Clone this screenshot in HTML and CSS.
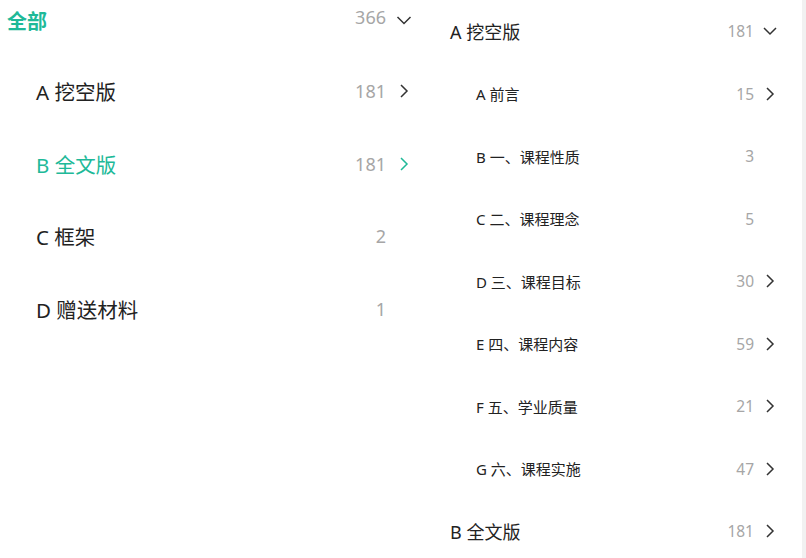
FILE: index.html
```html
<!DOCTYPE html>
<html lang="zh-CN">
<head>
    <meta charset="UTF-8">
    <title>目录</title>
    <link rel="stylesheet" href="styles.css">
</head>
<body>
    <div class="page">
        <!-- 左侧一级目录 -->
        <div class="side">
            <div class="side-head">
                <span class="side-title">全部</span>
                <span class="count">366</span>
                <span class="icon"><svg viewBox="0 0 16 16"><path d="M1.5 5 L8 11.5 L14.5 5"/></svg></span>
            </div>
            <div class="side-row">
                <span class="name">A 挖空版</span>
                <span class="count">181</span>
                <span class="icon"><svg viewBox="0 0 16 16"><path d="M5 2 L11 8 L5 14"/></svg></span>
            </div>
            <div class="side-row active">
                <span class="name">B 全文版</span>
                <span class="count">181</span>
                <span class="icon"><svg viewBox="0 0 16 16"><path d="M5 2 L11 8 L5 14"/></svg></span>
            </div>
            <div class="side-row">
                <span class="name">C 框架</span>
                <span class="count">2</span>
                <span class="icon"></span>
            </div>
            <div class="side-row">
                <span class="name">D 赠送材料</span>
                <span class="count">1</span>
                <span class="icon"></span>
            </div>
        </div>

        <!-- 右侧展开目录 -->
        <div class="tree">
            <div class="tree-row top">
                <span class="name">A 挖空版</span>
                <span class="count">181</span>
                <span class="icon"><svg viewBox="0 0 16 16"><path d="M2 5 L8 11 L14 5"/></svg></span>
            </div>
            <div class="tree-row sub">
                <span class="name">A 前言</span>
                <span class="count">15</span>
                <span class="icon"><svg viewBox="0 0 16 16"><path d="M5 2 L11 8 L5 14"/></svg></span>
            </div>
            <div class="tree-row sub">
                <span class="name">B 一、课程性质</span>
                <span class="count">3</span>
                <span class="icon"></span>
            </div>
            <div class="tree-row sub">
                <span class="name">C 二、课程理念</span>
                <span class="count">5</span>
                <span class="icon"></span>
            </div>
            <div class="tree-row sub">
                <span class="name">D 三、课程目标</span>
                <span class="count">30</span>
                <span class="icon"><svg viewBox="0 0 16 16"><path d="M5 2 L11 8 L5 14"/></svg></span>
            </div>
            <div class="tree-row sub">
                <span class="name">E 四、课程内容</span>
                <span class="count">59</span>
                <span class="icon"><svg viewBox="0 0 16 16"><path d="M5 2 L11 8 L5 14"/></svg></span>
            </div>
            <div class="tree-row sub">
                <span class="name">F 五、学业质量</span>
                <span class="count">21</span>
                <span class="icon"><svg viewBox="0 0 16 16"><path d="M5 2 L11 8 L5 14"/></svg></span>
            </div>
            <div class="tree-row sub">
                <span class="name">G 六、课程实施</span>
                <span class="count">47</span>
                <span class="icon"><svg viewBox="0 0 16 16"><path d="M5 2 L11 8 L5 14"/></svg></span>
            </div>
            <div class="tree-row top">
                <span class="name">B 全文版</span>
                <span class="count">181</span>
                <span class="icon"><svg viewBox="0 0 16 16"><path d="M5 2 L11 8 L5 14"/></svg></span>
            </div>
        </div>

        <div class="scroll-track"></div>
    </div>
</body>
</html>
```

FILE: styles.css
```css
body {
    margin: 0;
    padding: 0;
    background-color: #fff;
    font-family: "Noto Sans", "Noto Sans CJK SC", sans-serif;
    color: #222;
}

.page {
    display: flex;
    height: 558px;
    overflow: hidden;
}

.side {
    width: 420px;
    padding-right: 8px;
    box-sizing: border-box;
}

.side-head {
    display: flex;
    align-items: center;
    height: 40px;
    margin-bottom: 15px;
    padding-left: 7px;
}

.side-title {
    flex: 1;
    color: #20b998;
    font-size: 20px;
    font-weight: bold;
}

.side-head .count {
    margin-top: -6px;
}

.side-row {
    display: flex;
    align-items: center;
    height: 72.5px;
    padding-left: 36px;
}

.side-row .name {
    flex: 1;
    font-size: 20.5px;
}

.side-row.active .name {
    color: #20b998;
}

.side-row.active .icon path {
    stroke: #20b998;
}

.count {
    color: #a6a6a6;
    font-size: 18px;
}

.icon {
    width: 16px;
    height: 16px;
    margin-left: 10px;
    display: block;
}

.icon svg {
    width: 16px;
    height: 16px;
    display: block;
}

.icon path {
    fill: none;
    stroke: #333;
    stroke-width: 1.5;
}

.tree {
    flex: 1;
    padding-left: 30px;
    padding-right: 24px;
}

.tree-row {
    display: flex;
    align-items: center;
    height: 62.5px;
}

.tree-row .name {
    flex: 1;
}

.tree-row .count {
    font-size: 15.5px;
}

.tree-row .icon {
    margin-left: 8px;
}

.tree-row.top .name {
    font-size: 18px;
}

.tree-row.sub {
    padding-left: 26px;
}

.tree-row.sub .name {
    font-size: 15px;
}

.scroll-track {
    width: 4px;
    background-color: #f1f1f1;
}
```
